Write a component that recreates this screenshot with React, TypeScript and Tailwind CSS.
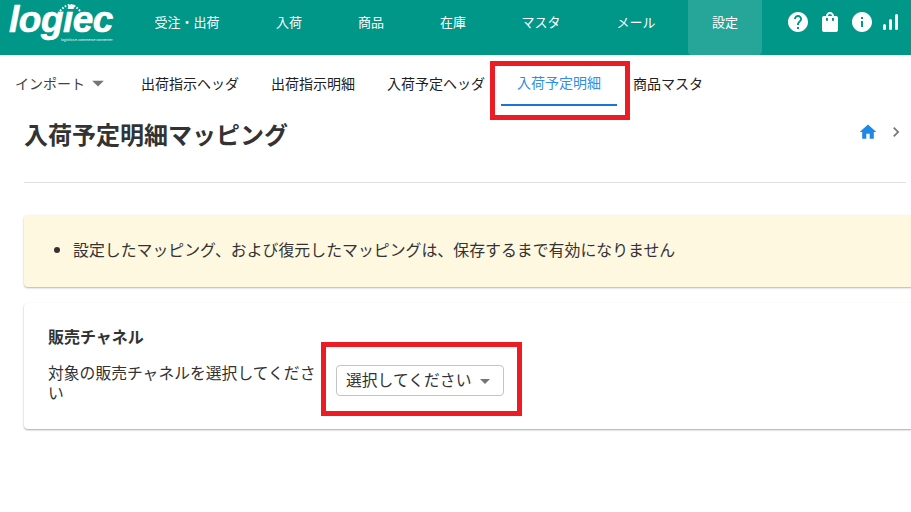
const NAV_ITEMS = [
  { label: "受注・出荷", cls: "w-[118px]" },
  { label: "入荷", cls: "w-[82px] ml-[2px]" },
  { label: "商品", cls: "w-[82px]" },
  { label: "在庫", cls: "w-[82px]" },
  { label: "マスタ", cls: "w-[94px]" },
  { label: "メール", cls: "w-[94px] ml-[1px]" },
];

const TABS = ["出荷指示ヘッダ", "出荷指示明細", "入荷予定ヘッダ", "入荷予定明細", "商品マスタ"];

function Icon({ d, className }: { d: string; className: string }) {
  return (
    <svg viewBox="0 0 24 24" fill="currentColor" className={className}>
      <path d={d} />
    </svg>
  );
}

function Logo() {
  return (
    <div className="relative w-[120px] h-[55px] shrink-0 ml-[8px] text-white">
      <svg viewBox="0 0 22 8" className="absolute left-[51px] top-[2px] w-[22px] h-[10px]" fill="none">
        <path d="M1 8 Q11 -4 21 8" stroke="white" strokeWidth="2" strokeDasharray="1.6 1.6" />
      </svg>
      <span className="absolute left-[1px] top-[3px] text-[37px] leading-[34px] font-bold italic tracking-[-0.5px] [-webkit-text-stroke:0.6px_white] font-['Liberation_Sans',sans-serif]">
        logiec
      </span>
      <span className="absolute left-[53px] top-[38px] text-[3.5px] leading-[4px] whitespace-nowrap">
        logistics e-commerce connecter
      </span>
    </div>
  );
}

export default function App() {
  return (
    <div className="relative w-[911px] h-[512px] overflow-hidden bg-white text-[#333] font-['Noto_Sans_CJK_JP','Noto_Sans',sans-serif]">
      {/* Header */}
      <header className="flex h-[55px] bg-[#009688] text-white">
        <Logo />
        <nav className="flex text-[13px]">
          {NAV_ITEMS.map((item) => (
            <div key={item.label} className={`flex items-center justify-center pb-[11px] ${item.cls}`}>
              {item.label}
            </div>
          ))}
          <div className="flex items-center justify-center pb-[11px] w-[74px] ml-[5px] rounded-b bg-white/15">設定</div>
        </nav>
        <div className="flex items-start pt-[10px] ml-[24px] gap-[8px]">
          <Icon
            className="w-6 h-6"
            d="M12 2C6.48 2 2 6.48 2 12s4.48 10 10 10 10-4.48 10-10S17.52 2 12 2zm1 17h-2v-2h2v2zm2.07-7.75l-.9.92C13.45 12.9 13 13.5 13 15h-2v-.5c0-1.1.45-2.1 1.17-2.83l1.24-1.26c.37-.36.59-.86.59-1.41 0-1.1-.9-2-2-2s-2 .9-2 2H8c0-2.21 1.79-4 4-4s4 1.79 4 4c0 .88-.36 1.68-.93 2.25z"
          />
          <Icon
            className="w-6 h-6"
            d="M18 6h-2c0-2.21-1.79-4-4-4S8 3.79 8 6H6c-1.1 0-2 .9-2 2v12c0 1.1.9 2 2 2h12c1.1 0 2-.9 2-2V8c0-1.1-.9-2-2-2zm-8 4c0 .55-.45 1-1 1s-1-.45-1-1V8h2v2zm2-6c1.1 0 2 .9 2 2h-4c0-1.1.9-2 2-2zm4 6c0 .55-.45 1-1 1s-1-.45-1-1V8h2v2z"
          />
          <Icon
            className="w-6 h-6"
            d="M12 2C6.48 2 2 6.48 2 12s4.48 10 10 10 10-4.48 10-10S17.52 2 12 2zm1 15h-2v-6h2v6zm0-8h-2V7h2v2z"
          />
          <div className="flex items-end gap-[3px] h-[16px] mt-[4px] ml-[1px]">
            <span className="w-[3px] h-[6px] rounded-full bg-white" />
            <span className="w-[3px] h-[11px] rounded-full bg-white" />
            <span className="w-[3px] h-[16px] rounded-full bg-white" />
          </div>
        </div>
      </header>

      {/* Tabs */}
      <div className="flex h-[51px] pl-[15px] text-sm text-[#212121]">
        <div className="flex items-center w-[110px] shrink-0 text-[#424242] pt-[5px]">
          インポート
          <Icon className="w-7 h-7 -ml-[1px] text-[#757575]" d="M7 10l5 5 5-5z" />
        </div>
        {TABS.map((tab, i) => (
          <div
            key={tab}
            className={
              i === 3
                ? "flex items-center px-4 pt-[5px] border-b-2 border-[#1976d2] text-[#2f8fe6]"
                : "flex items-center px-4 pt-[5px]"
            }
          >
            {tab}
          </div>
        ))}
      </div>

      {/* Page title */}
      <div className="flex items-center justify-between h-[77px] ml-[24px] border-b border-[#e0e0e0] pb-[21px] mr-[5px]">
        <h1 className="text-[24px] font-bold leading-none mt-[1px]">入荷予定明細マッピング</h1>
        <div className="flex items-center gap-[8px] -mt-[4px]">
          <Icon className="w-5 h-5 text-[#1e88e5]" d="M10 20v-6h4v6h5v-8h3L12 3 2 12h3v8z" />
          <Icon className="w-5 h-5 text-[#757575]" d="M10 6L8.59 7.41 13.17 12l-4.58 4.59L10 18l6-6z" />
        </div>
      </div>

      {/* Notice */}
      <div className="w-[900px] ml-[24px] mt-[32px] h-[72px] flex items-center pb-[2px] rounded bg-[#fff8e1] shadow-[0_1px_2px_rgba(0,0,0,0.3)] text-[15.9px]">
        <ul className="list-disc pl-[49px]">
          <li>設定したマッピング、および復元したマッピングは、保存するまで有効になりません</li>
        </ul>
      </div>

      {/* Sales channel card */}
      <div className="w-[900px] ml-[24px] mt-[16px] h-[126px] rounded bg-white shadow-[0_1px_2px_rgba(0,0,0,0.35)] px-[24px] pt-[21px]">
        <h2 className="text-base font-bold leading-6">販売チャネル</h2>
        <div className="flex items-start mt-[15px]">
          <p className="w-[270px] text-[15.8px] leading-[20px] break-all">対象の販売チャネルを選択してください</p>
          <div className="flex items-center justify-between ml-[18px] mt-[2px] w-[168px] h-[31px] rounded border border-[#c4c4c4] pl-[9px] pr-[7px] text-[15.8px]">
            <span className="-mt-[2px]">選択してください</span>
            <Icon className="w-6 h-6 -mr-[1px] text-[#757575]" d="M7 10l5 5 5-5z" />
          </div>
        </div>
      </div>

      {/* Annotation boxes */}
      <div className="absolute left-[490px] top-[61px] w-[140px] h-[59px] border-[5px] border-[#ed1c24]" />
      <div className="absolute left-[321px] top-[342px] w-[201px] h-[74px] border-[5px] border-[#ed1c24]" />
    </div>
  );
}
